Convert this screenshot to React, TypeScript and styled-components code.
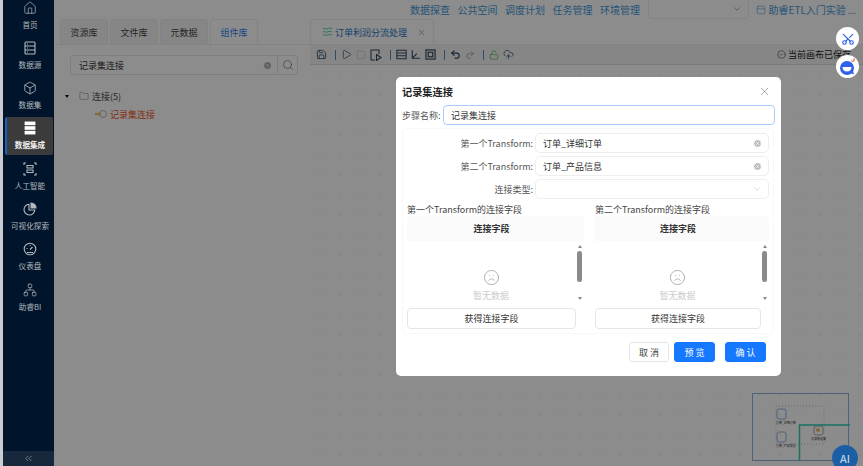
import React from "react"
import styled, { createGlobalStyle } from "styled-components"
import {
  ChevronDown,
  ChevronsLeft,
  CircleCheck,
  Folder,
  Frown,
  House,
  LockOpen,
  Network,
  Box,
  PanelTop,
  Play,
  Redo2,
  Save,
  Scissors,
  Search,
  Square,
  Undo2,
  UploadCloud,
  X,
  XCircle,
} from "lucide-react"

const GlobalStyle = createGlobalStyle`
  html, body {
    margin: 0;
    padding: 0;
    width: 863px;
    height: 466px;
    overflow: hidden;
    background: #fff;
    font-family: "Noto Sans CJK SC", "Noto Sans", sans-serif;
  }
  * { box-sizing: border-box; }
`

const DataSourceIcon = () => (
  <svg width="14" height="14" viewBox="0 0 14 14" fill="none" stroke="currentColor" strokeWidth="1.1">
    <rect x="2" y="1" width="10" height="12" rx="1" />
    <path d="M2 5h10M2 9h10M4 3h1M4 7h1M4 11h1" />
  </svg>
)

const IntegrationIcon = () => (
  <svg width="14" height="14" viewBox="0 0 12 13" fill="#fff">
    <rect x="1" y="0.5" width="10" height="3.4" />
    <rect x="1" y="4.8" width="10" height="3.4" />
    <rect x="1" y="9.1" width="10" height="3.4" />
  </svg>
)

const AiIcon = () => (
  <svg width="14" height="14" viewBox="0 0 14 14" fill="none" stroke="currentColor" strokeWidth="1.1">
    <path d="M1 3V1h2M11 1h2v2M13 11v2h-2M3 13H1v-2" />
    <path d="M4 3.5h6v2.5H4zM4 8h6v2.5H4z" />
  </svg>
)

const PieIcon = () => (
  <svg width="14" height="14" viewBox="0 0 14 14" fill="none" stroke="currentColor" strokeWidth="1.1">
    <path d="M6 2.2a5.4 5.4 0 1 0 5.8 5.8H6z" />
    <path d="M8 1a5 5 0 0 1 5 5H8z" fill="currentColor" />
  </svg>
)

const GaugeIcon = () => (
  <svg width="14" height="14" viewBox="0 0 14 14" fill="none" stroke="currentColor" strokeWidth="1.1">
    <circle cx="7" cy="7" r="5.8" />
    <path d="M4 10.500h6M7 7.500l2.500-2.500M3.500 6.500h1M6.500 3.500h1" />
  </svg>
)

const FilePlayIcon = () => (
  <svg width="12" height="12" viewBox="0 0 12 12" fill="none" stroke="currentColor" strokeWidth="1.1">
    <path d="M9 5V1H1v10h4" />
    <path d="M6.500 5.500l4.500 3-4.500 3z" />
  </svg>
)

const GridToolIcon = () => (
  <svg width="11" height="11" viewBox="0 0 13 12" fill="none" stroke="currentColor" strokeWidth="1.2">
    <rect x="1" y="1" width="11" height="10" />
    <path d="M1 4.3h11M1 7.6h11" />
  </svg>
)

const AxisIcon = () => (
  <svg width="10" height="11" viewBox="0 0 12 12" fill="none" stroke="currentColor" strokeWidth="1.3">
    <path d="M1.500 1v9.500H11M2 10l5-5" />
  </svg>
)

const FrameIcon = () => (
  <svg width="11" height="11" viewBox="0 0 12 12" fill="none" stroke="currentColor" strokeWidth="1.3">
    <rect x="1" y="1" width="10" height="10" />
    <rect x="3.500" y="3.500" width="5" height="5" />
  </svg>
)

const FlowIcon = () => (
  <svg width="12" height="10" viewBox="0 0 13 11" fill="none" stroke="#4fd0b0" strokeWidth="1.1">
    <path d="M1 2c2-1.500 3 1 5 0s3-1 5 0M1 5.500c2-1.500 3 1 5 0s3-1 5 0M1 9c2-1.500 3 1 5 0s3-1 5 0" />
  </svg>
)

const JoinIcon = () => (
  <svg width="13" height="10" viewBox="0 0 13 10" fill="none">
    <circle cx="8" cy="5" r="3.500" stroke="#bbb" />
    <path d="M0 5h6" stroke="#f0c070" strokeWidth="2.400" />
  </svg>
)

const RobotIcon = () => (
  <svg width="19" height="19" viewBox="0 0 19 19">
    <circle cx="9" cy="11" r="7" fill="#2f62e8" />
    <path d="M4.500 10h9c0 3-2 4.500-4.500 4.500S4.500 13 4.500 10z" fill="#fff" />
    <path d="M12 16l4 1.500-1-3.500z" fill="#2f62e8" />
    <path d="M13.500 3.500l1 1.500M16.500 1.500l-1 3" stroke="#e8622f" strokeWidth="1.200" />
  </svg>
)

const Minimap = () => (
  <MinimapSvg width="98" height="69" viewBox="0 0 98 69" fill="none">
    <rect x="0.500" y="0.500" width="96" height="67" stroke="#8fb4e0" />
    <rect x="24" y="13" width="48" height="38" stroke="#c4c4c4" strokeDasharray="1 2" />
    <rect x="25" y="16" width="9" height="10" rx="2" stroke="#8fb4e0" />
    <rect x="25" y="39" width="9" height="10" rx="2" stroke="#8fb4e0" />
    <rect x="62" y="33" width="9" height="9" rx="2" stroke="#aaa" />
    <circle cx="66" cy="37" r="2" fill="#f0c070" />
    <path d="M47.500 68V32H98" stroke="#2ad0b0" strokeWidth="1.500" />
    <text x="24" y="31" fontSize="3" fill="#333">订单_详细订单</text>
    <text x="24" y="54" fontSize="3" fill="#333">订单_产品信息</text>
    <text x="59" y="47" fontSize="3" fill="#333">记录集连接</text>
  </MinimapSvg>
)

const navItems = [
  { label: "首页", icon: <House size={14} strokeWidth={1.2} /> },
  { label: "数据源", icon: <DataSourceIcon /> },
  { label: "数据集", icon: <Box size={14} strokeWidth={1.4} /> },
  { label: "数据集成", icon: <IntegrationIcon />, active: true },
  { label: "人工智能", icon: <AiIcon /> },
  { label: "可视化探索", icon: <PieIcon /> },
  { label: "仪表盘", icon: <GaugeIcon /> },
  { label: "助睿BI", icon: <Network size={14} strokeWidth={1.2} /> },
]

const topLinks = ["数据探查", "公共空间", "调度计划", "任务管理", "环境管理"]
const panelTabs = ["资源库", "文件库", "元数据", "组件库"]

const FieldTable = ({ wide }: { wide?: boolean }) => (
  <FieldColumn $wide={wide}>
    <ColumnTitle>{wide ? "第一个Transform的连接字段" : "第二个Transform的连接字段"}</ColumnTitle>
    <TableBox>
      <TableHead>连接字段</TableHead>
      <TableBody>
        <EmptyState>
          <Frown size={17} strokeWidth={1.3} color="#aaa" />
          <span>暂无数据</span>
        </EmptyState>
        <ScrollTrack>
          <ArrowUp />
          <ScrollThumb />
          <ArrowDown />
        </ScrollTrack>
      </TableBody>
    </TableBox>
    <FetchButton $wide={wide}>获得连接字段</FetchButton>
  </FieldColumn>
)

const App = () => (
  <Page>
    <GlobalStyle />
    <EdgeStrip />
    <Sidebar>
      <NavList>
        {navItems.map((item) => (
          <NavItem key={item.label} $active={item.active}>
            {item.icon}
            <span>{item.label}</span>
          </NavItem>
        ))}
      </NavList>
      <Collapse>
        <ChevronsLeft size={11} strokeWidth={1.2} />
      </Collapse>
    </Sidebar>
    <Main>
      <TopBar>
        {topLinks.map((link) => (
          <TopLink key={link}>{link}</TopLink>
        ))}
        <TopSelect>
          <ChevronDown size={10} color="#999" />
        </TopSelect>
        <GuideLink>
          <PanelTop size={10} strokeWidth={1.3} />
          助睿ETL入门实验 ...
        </GuideLink>
      </TopBar>
      <Workspace>
        <LeftPanel>
          <TabRow>
            {panelTabs.map((tab) => (
              <PanelTab key={tab} $active={tab === "组件库"}>
                {tab}
              </PanelTab>
            ))}
          </TabRow>
          <SearchRow>
            <SearchInput>
              记录集连接
              <XCircle size={9} fill="#aaa" color="#fff" />
            </SearchInput>
            <SearchButton>
              <Search size={12} strokeWidth={1.3} />
            </SearchButton>
          </SearchRow>
          <Tree>
            <TreeRow>
              <Caret />
              <Folder size={10} strokeWidth={1} color="#556" />
              连接(5)
            </TreeRow>
            <TreeLeaf>
              <JoinIcon />
              记录集连接
            </TreeLeaf>
          </Tree>
        </LeftPanel>
        <CanvasPanel>
          <CanvasTabs>
            <CanvasTab>
              <FlowIcon />
              订单利润分流处理
              <X size={9} color="#999" />
            </CanvasTab>
          </CanvasTabs>
          <Toolbar>
            <Save size={11} strokeWidth={1.8} />
            <ToolDivider />
            <Play size={11} strokeWidth={1.6} />
            <Square size={10} strokeWidth={1.2} color="#aaa" />
            <FilePlayIcon />
            <ToolDivider />
            <GridToolIcon />
            <AxisIcon />
            <FrameIcon />
            <ToolDivider />
            <Undo2 size={11} strokeWidth={2.6} />
            <Redo2 size={10} strokeWidth={2.4} color="#aaa" />
            <ToolDivider />
            <LockOpen size={10} strokeWidth={1.8} color="#4fc04f" />
            <UploadCloud size={11} strokeWidth={1.6} />
            <SaveState>
              <CircleCheck size={9} strokeWidth={1.3} />
              当前画布已保存
            </SaveState>
          </Toolbar>
          <Canvas />
        </CanvasPanel>
      </Workspace>
      <Minimap />
    </Main>
    <Mask />
    <Modal>
      <ModalHeader>
        <ModalTitle>记录集连接</ModalTitle>
        <X size={13} strokeWidth={1} color="#666" />
      </ModalHeader>
      <StepRow>
        <StepLabel>步骤名称:</StepLabel>
        <StepInput>记录集连接</StepInput>
      </StepRow>
      <FormBox>
        <FieldRow>
          <FieldLabel>第一个Transform:</FieldLabel>
          <SelectBox>
            订单_详细订单
            <XCircle size={9} fill="#bbb" color="#fff" />
          </SelectBox>
        </FieldRow>
        <FieldRow>
          <FieldLabel>第二个Transform:</FieldLabel>
          <SelectBox>
            订单_产品信息
            <XCircle size={9} fill="#bbb" color="#fff" />
          </SelectBox>
        </FieldRow>
        <FieldRow>
          <FieldLabel>连接类型:</FieldLabel>
          <SelectBox>
            <span />
            <ChevronDown size={10} strokeWidth={1} color="#aaa" />
          </SelectBox>
        </FieldRow>
        <Columns>
          <FieldTable wide />
          <FieldTable />
        </Columns>
      </FormBox>
      <ModalFooter>
        <FooterButton>取 消</FooterButton>
        <FooterButton $primary>预 览</FooterButton>
        <FooterButton $primary>确 认</FooterButton>
      </ModalFooter>
    </Modal>
    <FloatButton $top={27}>
      <ScissorsTurn>
        <Scissors size={14} strokeWidth={2} color="#2f62e8" />
      </ScissorsTurn>
    </FloatButton>
    <FloatButton $top={55}>
      <RobotIcon />
    </FloatButton>
    <AiBadge>AI</AiBadge>
  </Page>
)

export default App

const Page = styled.div`
  position: relative;
  display: flex;
  width: 863px;
  height: 466px;
  overflow: hidden;
  background: #fff;
`

const EdgeStrip = styled.div`
  position: relative;
  z-index: 1;
  width: 3px;
  background: #c9ccd0;
`

const Sidebar = styled.aside`
  position: relative;
  z-index: 1;
  width: 51px;
  display: flex;
  flex-direction: column;
  justify-content: space-between;
  background: #00152b;
  color: #b4b8bd;
`

const NavList = styled.nav`
  display: flex;
  flex-direction: column;
  gap: 2.3px;
  margin-top: -4px;
`

const NavItem = styled.div<{ $active?: boolean }>`
  height: 38px;
  margin: 0 1px 0 2px;
  display: flex;
  flex-direction: column;
  align-items: center;
  justify-content: center;
  gap: 5px;
  font-size: 7.6px;
  line-height: 10px;
  white-space: nowrap;
  border-radius: 2px;
  background: ${(p) => (p.$active ? "#3b3b3b" : "transparent")};
  border-left: 2px solid ${(p) => (p.$active ? "#1762b8" : "transparent")};
  color: ${(p) => (p.$active ? "#f0f0f0" : "inherit")};
  font-weight: ${(p) => (p.$active ? 700 : 400)};
`

const Collapse = styled.div`
  height: 15px;
  display: flex;
  align-items: center;
  justify-content: center;
  background: #17283c;
`

const Main = styled.main`
  position: relative;
  flex: 1;
  display: flex;
  flex-direction: column;
`

const TopBar = styled.header`
  height: 19px;
  display: flex;
  align-items: center;
  padding-left: 356px;
  font-size: 10px;
  color: #3f9bdc;
`

const TopLink = styled.span`
  width: 47.500px;
  white-space: nowrap;
`

const TopSelect = styled.div`
  width: 101px;
  height: 18px;
  display: flex;
  align-items: center;
  justify-content: flex-end;
  padding-right: 6px;
  margin: 0 7px 0 0;
  border: 1px solid #eee;
  border-top: none;
  border-radius: 0 0 4px 4px;
`

const GuideLink = styled.span`
  display: flex;
  align-items: center;
  gap: 3px;
  white-space: nowrap;
`

const Workspace = styled.div`
  flex: 1;
  display: flex;
  min-height: 0;
`

const LeftPanel = styled.section`
  width: 256px;
  display: flex;
  flex-direction: column;
`

const TabRow = styled.div`
  height: 26px;
  display: flex;
  gap: 2px;
  padding-left: 6px;
  border-bottom: 1px solid #eee;
`

const PanelTab = styled.div<{ $active?: boolean }>`
  width: 48px;
  display: flex;
  align-items: center;
  justify-content: center;
  font-size: 9px;
  border: 1px solid #eee;
  border-bottom: none;
  border-radius: 4px 4px 0 0;
  background: ${(p) => (p.$active ? "#fff" : "#f5f5f5")};
  color: ${(p) => (p.$active ? "#2f7ef0" : "#444")};
`

const SearchRow = styled.div`
  display: flex;
  height: 20px;
  margin: 10px 12px 0 16px;
`

const SearchInput = styled.div`
  flex: 1;
  display: flex;
  align-items: center;
  justify-content: space-between;
  padding: 0 5px 0 8px;
  font-size: 9px;
  color: #333;
  border: 1px solid #e6e6e6;
  border-radius: 4px 0 0 4px;
`

const SearchButton = styled.div`
  width: 20px;
  display: flex;
  align-items: center;
  justify-content: center;
  color: #666;
  border: 1px solid #e6e6e6;
  border-left: none;
  border-radius: 0 4px 4px 0;
`

const Tree = styled.div`
  display: flex;
  flex-direction: column;
  gap: 6px;
  margin-top: 15px;
  padding-left: 11px;
  font-size: 9px;
`

const TreeRow = styled.div`
  height: 12px;
  display: flex;
  align-items: center;
  gap: 3px;
  color: #444;
`

const Caret = styled.i`
  width: 0;
  height: 0;
  margin-right: 7px;
  border: 2.500px solid transparent;
  border-top: 3px solid #111;
  border-bottom: none;
`

const TreeLeaf = styled.div`
  height: 12px;
  display: flex;
  align-items: center;
  gap: 2px;
  padding-left: 30px;
  color: #f0521a;
`

const CanvasPanel = styled.section`
  flex: 1;
  display: flex;
  flex-direction: column;
  min-width: 0;
`

const CanvasTabs = styled.div`
  height: 26px;
  display: flex;
  border-bottom: 1px solid #eee;
`

const CanvasTab = styled.div`
  width: 124px;
  display: flex;
  align-items: center;
  gap: 1px;
  padding-left: 11px;
  font-size: 9px;
  white-space: nowrap;
  color: #2a78c8;
  border: 1px solid #eee;
  border-bottom: none;
  border-radius: 4px 4px 0 0;

  svg:last-child {
    margin-left: 9px;
  }
`

const Toolbar = styled.div`
  height: 20px;
  display: flex;
  align-items: center;
  gap: 4px;
  padding-left: 6px;
  color: #2f4a60;
  background: #f5f5f5;
  border-bottom: 1px solid #dcdcdc;
`

const ToolDivider = styled.i`
  width: 1px;
  height: 10px;
  margin: 0 1px 0 4px;
  background: #4f8fc0;
`

const SaveState = styled.span`
  display: flex;
  align-items: center;
  gap: 2px;
  margin-left: auto;
  margin-right: 12px;
  font-size: 9px;
  color: #222;
`

const Canvas = styled.div`
  flex: 1;
  background-color: #fff;
  background-image: radial-gradient(#e6e6e6 0.6px, transparent 0.8px);
  background-size: 20px 20px;
`

const MinimapSvg = styled.svg`
  position: absolute;
  left: 698px;
  top: 393px;
`

const Mask = styled.div`
  position: absolute;
  inset: 0;
  background: rgba(0, 0, 0, 0.45);
`

const Modal = styled.div`
  position: absolute;
  z-index: 2;
  left: 396px;
  top: 77px;
  width: 385px;
  height: 299px;
  padding: 0 6px;
  background: #fff;
  border-radius: 5px;
  display: flex;
  flex-direction: column;
`

const ModalHeader = styled.div`
  height: 28px;
  display: flex;
  align-items: center;
  justify-content: space-between;
  padding-right: 4px;
`

const ModalTitle = styled.h3`
  margin: 0;
  font-size: 10.200px;
  font-weight: 700;
  color: #222;
`

const StepRow = styled.div`
  display: flex;
  align-items: center;
  height: 20px;
`

const StepLabel = styled.label`
  width: 41px;
  font-size: 9px;
  white-space: nowrap;
  color: #555;
`

const StepInput = styled.div`
  flex: 1;
  height: 20px;
  display: flex;
  align-items: center;
  padding-left: 7px;
  font-size: 9px;
  color: #333;
  border: 1px solid #a8cdfb;
  border-radius: 4px;
`

const FormBox = styled.div`
  width: 372px;
  height: 206px;
  margin-top: 3px;
  padding: 4px;
  border: 1px solid #f8f8f8;
  border-radius: 5px;
  display: flex;
  flex-direction: column;
  gap: 3px;
`

const FieldRow = styled.div`
  display: flex;
  align-items: center;
  height: 20px;
`

const FieldLabel = styled.label`
  width: 128px;
  padding-right: 2px;
  text-align: right;
  font-size: 9px;
  white-space: nowrap;
  color: #555;
`

const SelectBox = styled.div`
  flex: 1;
  height: 20px;
  display: flex;
  align-items: center;
  justify-content: space-between;
  padding: 0 6px 0 7px;
  font-size: 9px;
  color: #333;
  border: 1px solid #eee;
  border-radius: 5px;
`

const Columns = styled.div`
  display: flex;
  gap: 11px;
  margin-top: 1px;
`

const FieldColumn = styled.div<{ $wide?: boolean }>`
  width: ${(p) => (p.$wide ? 177 : 174)}px;
  display: flex;
  flex-direction: column;
`

const ColumnTitle = styled.div`
  height: 13px;
  line-height: 13px;
  font-size: 9px;
  white-space: nowrap;
  color: #444;
`

const TableBox = styled.div`
  height: 89px;
  display: flex;
  flex-direction: column;
`

const TableHead = styled.div`
  height: 25px;
  display: flex;
  align-items: center;
  justify-content: center;
  padding-right: 8px;
  font-size: 9px;
  font-weight: 700;
  color: #333;
  background: #fafafa;
  border-radius: 4px 4px 0 0;
`

const TableBody = styled.div`
  flex: 1;
  display: flex;
`

const EmptyState = styled.div`
  flex: 1;
  display: flex;
  flex-direction: column;
  align-items: center;
  gap: 3px;
  padding-top: 28px;
  font-size: 9px;
  line-height: 13px;
  color: #ccc;
`

const ScrollTrack = styled.div`
  width: 9px;
  display: flex;
  flex-direction: column;
  align-items: center;
  gap: 3px;
  padding-top: 4px;
`

const ArrowUp = styled.i`
  width: 0;
  height: 0;
  border: 2.500px solid transparent;
  border-bottom: 3px solid #888;
  border-top: none;
`

const ArrowDown = styled.i`
  width: 0;
  height: 0;
  margin-top: 12px;
  border: 2.500px solid transparent;
  border-top: 3px solid #888;
  border-bottom: none;
`

const ScrollThumb = styled.i`
  width: 5px;
  height: 31px;
  border-radius: 3px;
  background: #8a8a8a;
`

const FetchButton = styled.button<{ $wide?: boolean }>`
  width: ${(p) => (p.$wide ? 169 : 166)}px;
  height: 21px;
  margin-top: 3px;
  padding: 0;
  font: inherit;
  font-size: 9px;
  color: #333;
  background: #fff;
  border: 1px solid #e6e6e6;
  border-radius: 4px;
`

const ModalFooter = styled.div`
  display: flex;
  justify-content: flex-end;
  gap: 5px;
  margin-top: 8px;
  padding-right: 9px;

  button:last-child {
    margin-left: 5px;
  }
`

const FooterButton = styled.button<{ $primary?: boolean }>`
  width: ${(p) => (p.$primary ? 41 : 40)}px;
  height: 20px;
  padding: 0;
  font: inherit;
  font-size: 9px;
  color: ${(p) => (p.$primary ? "#fff" : "#444")};
  background: ${(p) => (p.$primary ? "#1677ff" : "#fff")};
  border: 1px solid ${(p) => (p.$primary ? "#1677ff" : "#e6e6e6")};
  border-radius: 3px;
`

const FloatButton = styled.div<{ $top: number }>`
  position: absolute;
  z-index: 2;
  left: 836px;
  top: ${(p) => p.$top}px;
  width: 23px;
  height: 23px;
  display: flex;
  align-items: center;
  justify-content: center;
  border-radius: 50%;
  background: #fff;
`

const ScissorsTurn = styled.span`
  display: flex;
  transform: rotate(-90deg);
`

const AiBadge = styled.div`
  position: absolute;
  z-index: 2;
  left: 832px;
  top: 445px;
  width: 26px;
  height: 26px;
  display: flex;
  align-items: center;
  justify-content: center;
  font-size: 11px;
  color: #d8e2ee;
  background: #1b5ea6;
  border-radius: 50%;
`
